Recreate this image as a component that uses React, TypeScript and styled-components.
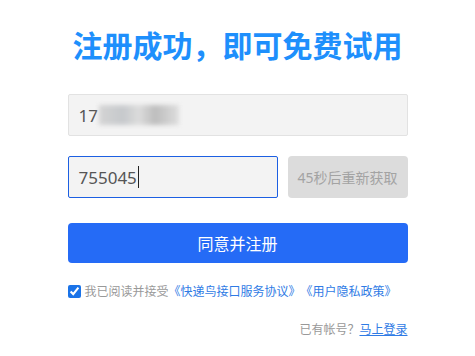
import * as React from 'react';
import styled, { createGlobalStyle } from 'styled-components';

const GlobalStyle = createGlobalStyle`
  body {
    margin: 0;
    background: #fff;
    font-family: "Noto Sans", "Noto Sans CJK SC", sans-serif;
  }
`;

const Page = styled.div`
  width: 340px;
  margin: 0 auto;
  padding-top: 24px;
`;

const Title = styled.h1`
  margin: 0 0 26px 0;
  text-align: center;
  font-size: 30px;
  line-height: 44px;
  font-weight: 700;
  color: #1e8ffc;
`;

const Field = styled.div<{ $focused?: boolean }>`
  flex: 1;
  height: 42px;
  box-sizing: border-box;
  display: flex;
  align-items: center;
  padding: 0 10px;
  background: #f3f3f3;
  border: 1px solid ${(p) => (p.$focused ? '#1c5fe2' : '#e2e2e2')};
  border-radius: 2px;
  font-size: 17px;
  color: #555;
`;

const Blur = styled.span`
  display: inline-block;
  width: 80px;
  height: 20px;
  margin-left: 1px;
  background: linear-gradient(90deg, #d4d4d4, #c6c9cc 30%, #dcdcdc 50%, #bdbdbd 70%, #dedede);
  filter: blur(2px);
`;

const Caret = styled.span`
  display: inline-block;
  width: 1px;
  height: 22px;
  margin-left: 1px;
  background: #222;
`;

const Row = styled.div`
  display: flex;
  gap: 10px;
  margin-top: 20px;
`;

const CodeButton = styled.button`
  width: 120px;
  height: 42px;
  border: none;
  border-radius: 4px;
  background: #dcdcdc;
  color: #a3a3a3;
  font-family: inherit;
  font-size: 14px;
  padding: 0;
`;

const Submit = styled.button`
  display: block;
  width: 100%;
  height: 40px;
  margin-top: 25px;
  border: none;
  border-radius: 4px;
  background: #256bf6;
  color: #fff;
  font-family: inherit;
  font-size: 16px;
`;

const Agree = styled.label`
  display: flex;
  align-items: center;
  margin-top: 19px;
  font-size: 12px;
  color: #999;
  input {
    width: 13px;
    height: 13px;
    margin: 0 4px 0 0;
    accent-color: #1a73e8;
  }
`;

const Link = styled.a<{ $underline?: boolean }>`
  color: #2f7be5;
  text-decoration: ${(p) => (p.$underline ? 'underline' : 'none')};
`;

const Login = styled.div`
  margin-top: 20px;
  text-align: right;
  font-size: 12px;
  color: #999;
`;

const App: React.FC = () => (
  <>
    <GlobalStyle />
    <Page>
      <Title>注册成功，即可免费试用</Title>
      <Field>
        17
        <Blur />
      </Field>
      <Row>
        <Field $focused>
          755045
          <Caret />
        </Field>
        <CodeButton>45秒后重新获取</CodeButton>
      </Row>
      <Submit>同意并注册</Submit>
      <Agree>
        <input type="checkbox" defaultChecked />
        我已阅读并接受
        <Link href="#">《快递鸟接口服务协议》</Link>
        <Link href="#">《用户隐私政策》</Link>
      </Agree>
      <Login>
        已有帐号？<Link href="#" $underline>马上登录</Link>
      </Login>
    </Page>
  </>
);

export default App;
